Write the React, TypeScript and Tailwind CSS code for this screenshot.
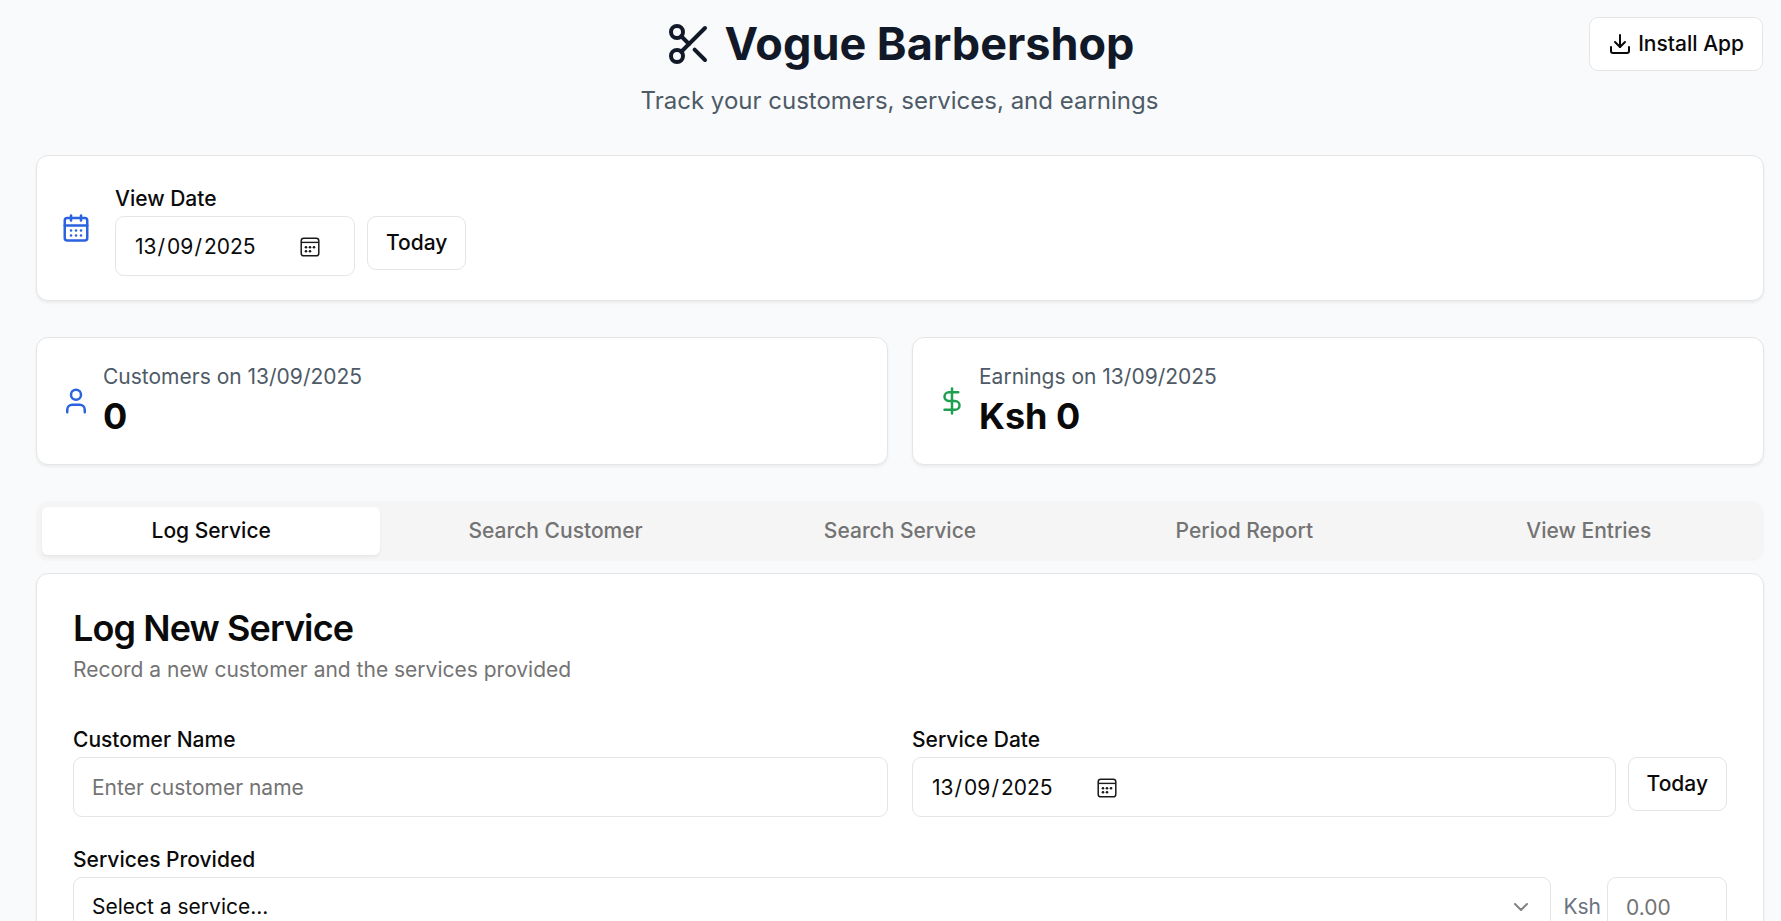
import { useState } from "react";
import type { ReactNode } from "react";
import { CalendarDays, ChevronDown, DollarSign, Download, Scissors, User } from "lucide-react";

const TABS = ["Log Service", "Search Customer", "Search Service", "Period Report", "View Entries"];

function Card({ children, className = "" }: { children: ReactNode; className?: string }) {
  return (
    <section className={`rounded-xl border border-[#e5e5e5] bg-white shadow-[0_2px_3px_rgba(0,0,0,0.06)] ${className}`}>
      {children}
    </section>
  );
}

function OutlineButton({ children }: { children: ReactNode }) {
  return (
    <button
      type="button"
      className="flex h-[54px] shrink-0 items-center justify-center gap-1.5 rounded-[9px] border border-[#e5e5e5] bg-white px-[18px] font-medium"
    >
      {children}
    </button>
  );
}

function FieldLabel({ htmlFor, children }: { htmlFor: string; children: ReactNode }) {
  return (
    <label htmlFor={htmlFor} className="block h-9 pt-1 font-medium">
      {children}
    </label>
  );
}

function DateGlyph() {
  return (
    <svg viewBox="0 0 20 20" className="size-5" fill="none" aria-hidden="true">
      <rect x="1.2" y="1.2" width="17.6" height="17.6" rx="2.6" stroke="#1a1a1a" strokeWidth="1.5" />
      <path d="M1.2 5.4h17.6" stroke="#1a1a1a" strokeWidth="1.4" />
      <g fill="#1a1a1a">
        <circle cx="6" cy="10.2" r="1.3" />
        <circle cx="10" cy="10.2" r="1.3" />
        <circle cx="14" cy="10.2" r="1.3" />
        <circle cx="6" cy="14.2" r="1.3" />
        <circle cx="10" cy="14.2" r="1.3" />
      </g>
    </svg>
  );
}

const SEGMENT = "field-sizing-content bg-transparent px-px outline-none";

function DateField({ id, className = "" }: { id: string; className?: string }) {
  return (
    <div
      role="group"
      className={`flex h-[60px] items-center rounded-[9px] border border-[#e5e5e5] bg-white px-[18px] pt-0.5 ${className}`}
    >
      <input id={id} aria-label="Day" inputMode="numeric" maxLength={2} defaultValue="13" className={SEGMENT} />
      <span className="pr-px">/</span>
      <input aria-label="Month" inputMode="numeric" maxLength={2} defaultValue="09" className={SEGMENT} />
      <span className="pr-px">/</span>
      <input aria-label="Year" inputMode="numeric" maxLength={4} defaultValue="2025" className={SEGMENT} />
      <button type="button" aria-label="Open calendar" className="ml-[43px]">
        <DateGlyph />
      </button>
    </div>
  );
}

function Stat({ icon, label, value }: { icon: ReactNode; label: string; value: string }) {
  return (
    <Card className="flex items-center gap-3 p-6">
      {icon}
      <div>
        <p className="text-[#4e5a66]">{label}</p>
        <p className="text-4xl leading-[48px] font-bold">{value}</p>
      </div>
    </Card>
  );
}

export default function App() {
  const [active, setActive] = useState(TABS[0]);

  return (
    <div className="min-h-screen bg-[#f9fafc] pt-[17px] pr-[17px] pb-9 pl-9 font-['Inter',sans-serif] text-[21px] leading-[30px] text-[#0a0a0a]">
      <header className="grid grid-cols-[1fr_auto_1fr] items-start pr-px">
        <div className="col-start-2 flex flex-col items-center gap-3">
          <h1 className="flex items-center gap-3 text-[45px] leading-[54px] font-bold text-[#111827]">
            <Scissors className="size-12" />
            Vogue Barbershop
          </h1>
          <p className="text-2xl leading-9 text-[#4e5a66]">Track your customers, services, and earnings</p>
        </div>
        <div className="flex justify-end">
          <OutlineButton>
            <Download className="size-6" />
            Install App
          </OutlineButton>
        </div>
      </header>

      <main className="mt-9 flex flex-col gap-9">
        <Card className="flex items-center gap-6 p-6">
          <CalendarDays className="size-[30px] text-[#2b62de]" />
          <div>
            <FieldLabel htmlFor="view-date">View Date</FieldLabel>
            <div className="flex gap-3">
              <DateField id="view-date" className="w-60" />
              <OutlineButton>Today</OutlineButton>
            </div>
          </div>
        </Card>

        <div className="grid grid-cols-2 gap-6">
          <Stat
            icon={<User className="size-[30px] text-[#2b62de]" />}
            label="Customers on 13/09/2025"
            value="0"
          />
          <Stat
            icon={<DollarSign className="size-[30px] text-[#1fa050]" />}
            label="Earnings on 13/09/2025"
            value="Ksh 0"
          />
        </div>

        <div className="flex flex-col gap-3">
          <div role="tablist" className="grid h-[60px] grid-cols-5 gap-1.5 rounded-xl bg-[#f5f5f5] p-1.5">
            {TABS.map((tab) => (
              <button
                key={tab}
                type="button"
                role="tab"
                aria-selected={tab === active}
                onClick={() => setActive(tab)}
                className={
                  tab === active
                    ? "rounded-md bg-white font-medium shadow-[0_2px_3px_rgba(0,0,0,0.06)]"
                    : "rounded-md font-medium text-[#737373]"
                }
              >
                {tab}
              </button>
            ))}
          </div>

          <Card className="p-9">
            <h2 className="text-4xl leading-9 font-semibold tracking-tight">Log New Service</h2>
            <p className="mt-[9px] text-[#737373]">Record a new customer and the services provided</p>

            <form className="mt-9 flex flex-col gap-6">
              <div className="grid grid-cols-2 gap-6">
                <div>
                  <FieldLabel htmlFor="customer-name">Customer Name</FieldLabel>
                  <input
                    id="customer-name"
                    type="text"
                    placeholder="Enter customer name"
                    className="h-[60px] w-full rounded-[9px] border border-[#e5e5e5] px-[18px] placeholder:text-[#737373]"
                  />
                </div>
                <div>
                  <FieldLabel htmlFor="service-date">Service Date</FieldLabel>
                  <div className="flex gap-3">
                    <DateField id="service-date" className="flex-1" />
                    <OutlineButton>Today</OutlineButton>
                  </div>
                </div>
              </div>

              <div>
                <FieldLabel htmlFor="service">Services Provided</FieldLabel>
                <div className="flex items-center gap-3">
                  <div className="grid flex-1 items-center">
                    <select
                      id="service"
                      className="col-start-1 row-start-1 h-[60px] w-full appearance-none rounded-[9px] border border-[#e5e5e5] bg-white px-[18px]"
                    >
                      <option>Select a service...</option>
                    </select>
                    <ChevronDown className="pointer-events-none col-start-1 row-start-1 mr-[18px] size-6 justify-self-end opacity-50" />
                  </div>
                  <div className="flex items-center gap-1.5">
                    <label htmlFor="price" className="text-[#6b7280]">
                      Ksh
                    </label>
                    <input
                      id="price"
                      type="text"
                      inputMode="decimal"
                      placeholder="0.00"
                      className="h-[60px] w-[120px] rounded-[9px] border border-[#e5e5e5] px-[18px] placeholder:text-[#737373]"
                    />
                  </div>
                </div>
              </div>
            </form>
          </Card>
        </div>
      </main>
    </div>
  );
}
